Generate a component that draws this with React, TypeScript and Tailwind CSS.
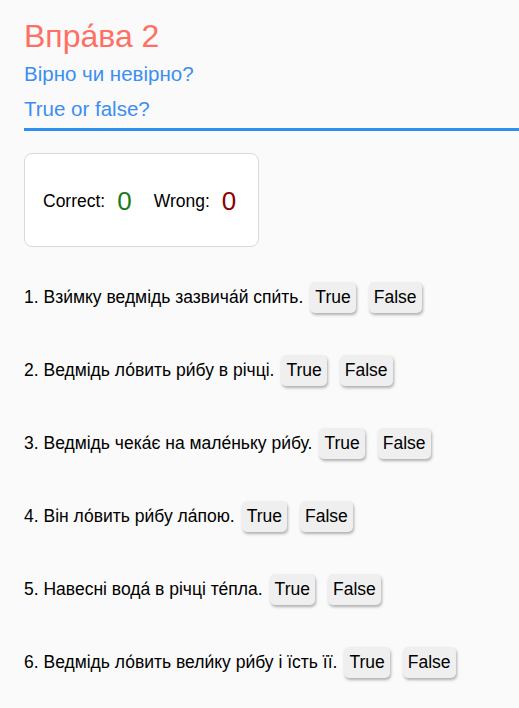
import React, { useState } from 'react';

const statements = [
  'Взи́мку ведмідь зазвича́й спи́ть.',
  'Ведмідь ло́вить ри́бу в річці.',
  'Ведмідь чека́є на мале́ньку ри́бу.',
  'Він ло́вить ри́бу ла́пою.',
  'Навесні вода́ в річці те́пла.',
  'Ведмідь ло́вить вели́ку ри́бу і їсть її.',
];

export default function App() {
  const [correct] = useState(0);
  const [wrong] = useState(0);

  return (
    <div className="min-h-screen bg-[#fafafa] pl-6 pt-[13px] text-black" style={{ fontFamily: '"Liberation Sans", Arial, sans-serif' }}>
      {/* Header */}
      <h1 className="text-[32px] leading-[46px] text-[#ff6f66]">Впра́ва 2</h1>
      <div className="border-b-[3px] border-[#2f8ff0] pb-[4px]">
        <p className="text-[20.5px] leading-[30px] text-[#3b8ef2]">Вірно чи невірно?</p>
        <p className="mt-[5px] text-[20.5px] leading-[30px] text-[#3b8ef2]">True or false?</p>
      </div>

      {/* Score card */}
      <div className="mt-[22px] flex h-[94px] w-[235px] items-center rounded-lg border border-[#d9d9d9] bg-white pl-[18px] pt-[2px]">
        <span className="text-[17.5px]">Correct:</span>
        <span className="ml-[12px] text-[26px] text-[#1a7a1a]">{correct}</span>
        <span className="ml-[22px] text-[17.5px]">Wrong:</span>
        <span className="ml-[12px] text-[26px] text-[#8b0000]">{wrong}</span>
      </div>

      {/* Questions */}
      <div className="mt-[35px] flex flex-col gap-[42px]">
        {statements.map((s, i) => (
          <div key={i} className="flex h-[31px] items-center text-[17.5px]">
            <span>
              {i + 1}. {s}
            </span>
            <button className="ml-[7px] h-[31px] rounded-[5px] bg-[#efefef] px-[5px] text-[17.5px] shadow-[1px_2px_3px_rgba(0,0,0,0.3)]">
              True
            </button>
            <button className="ml-[13px] h-[31px] rounded-[5px] bg-[#efefef] px-[5px] text-[17.5px] shadow-[1px_2px_3px_rgba(0,0,0,0.3)]">
              False
            </button>
          </div>
        ))}
      </div>
    </div>
  );
}
